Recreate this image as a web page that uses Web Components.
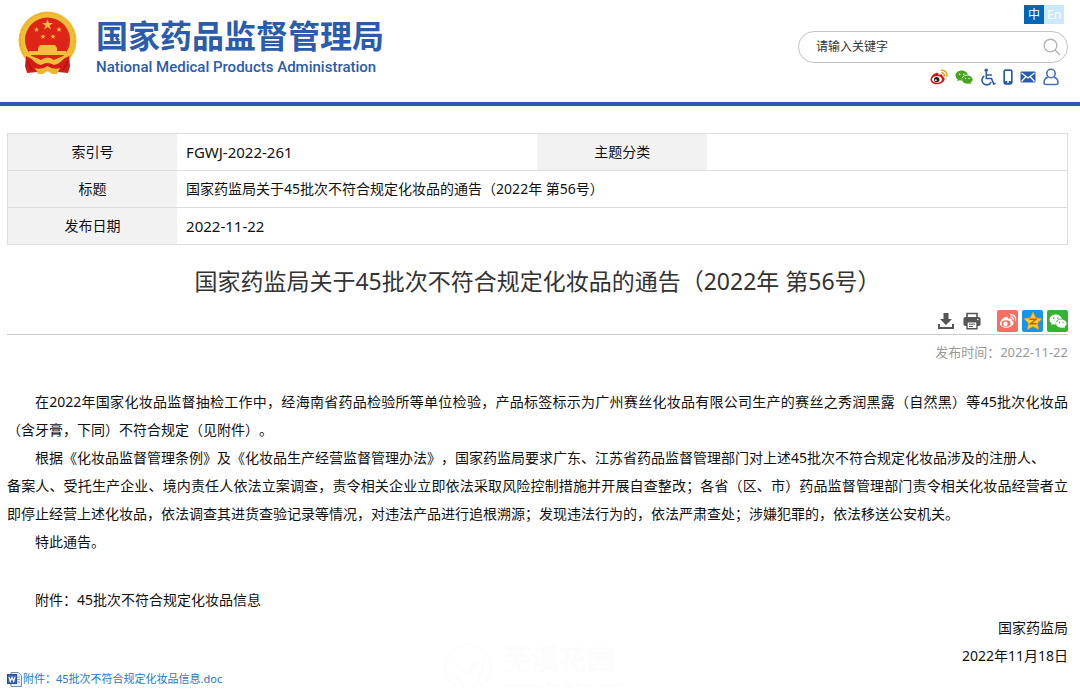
<!DOCTYPE html>
<html lang="zh-CN">
<head>
<meta charset="utf-8">
<title>国家药监局关于45批次不符合规定化妆品的通告</title>
<style>
  body {
    margin: 0;
    background: #fff;
    color: #111;
    font: 14px/28px "Noto Sans", "Noto Sans CJK SC", sans-serif;
    text-spacing-trim: space-all;
  }
</style>
</head>
<body>
<notice-page></notice-page>

<script>
const define = (name, html) => customElements.define(name, class extends HTMLElement {
  constructor() {
    super();
    this.attachShadow({ mode: 'open' }).innerHTML = html;
  }
});

// glyphs shared by the header row and the share buttons
const ICONS = {
  weibo: `<svg viewBox="0 0 18 16"><path d="M.5 10.500C.5 7 6 2.500 8 4c.8.500.5 1.300.3 1.900 2.700-.9 4.800-.6 4.300 1.600C17.500 9.500 13 15.300 7 15.300c-3.500 0-6.500-1.800-6.500-4.800z" fill="#e0120f"/><ellipse cx="7" cy="10.400" rx="5" ry="3.500" fill="#fff"/><circle cx="6.700" cy="10.600" r="2.700" fill="#222"/><circle cx="5.900" cy="11.200" r=".9" fill="#fff"/><path d="M11.500 1.200a5 5 0 0 1 5.300 6.300M11.800 3.800a2.500 2.500 0 0 1 2.500 3" fill="none" stroke="#f0a416" stroke-width="1.500" stroke-linecap="round"/></svg>`,
  weiboWhite: `<svg viewBox="0 0 18 16"><path d="M1 10.500C1 7 6.500 2.500 8.500 4c.6.500.4 1.300.2 1.900 2.500-.9 4.600-.6 4 1.600 5 2-.5 7.300-5.500 7.300C4 14.800 1 13 1 10.500z" fill="#fff"/><ellipse cx="7" cy="10.400" rx="4.500" ry="3.200" fill="#f56f63"/><circle cx="6.500" cy="10.700" r="2.200" fill="#fff"/><path d="M11.500 1.600a4.700 4.700 0 0 1 5 6M12 4a2.200 2.200 0 0 1 2.200 2.700" fill="none" stroke="#fff" stroke-width="1.300" stroke-linecap="round"/></svg>`,
  wechat: `<svg viewBox="0 0 18 16"><path d="M6.800 1.500C3.300 1.500.5 3.700.5 6.500c0 1.600.9 3 2.300 3.900L2.300 12.300l2.100-1.100c.8.200 1.600.3 2.500.3C6 7.800 9 5.500 12.900 5.700 12.200 3.300 9.800 1.500 6.800 1.500z" fill="currentColor"/><path d="M12.300 6.500c-3 0-5.300 1.800-5.300 4.100s2.300 4.100 5.300 4.100c.7 0 1.300-.1 1.900-.3l1.700.9-.4-1.500c1.300-.8 2.100-1.900 2.100-3.200 0-2.300-2.300-4.100-5.300-4.100z" fill="currentColor"/><g fill="var(--eye, #fff)"><circle cx="4.700" cy="5.200" r=".8"/><circle cx="8.700" cy="5.200" r=".8"/><circle cx="10.500" cy="9.500" r=".7"/><circle cx="14" cy="9.500" r=".7"/></g></svg>`,
  access: `<svg viewBox="0 0 16 18" fill="none" stroke="#2b5cab" stroke-width="1.600"><circle cx="6.200" cy="2.200" r="1.700" fill="#2b5cab" stroke="none"/><path d="M6.300 4v6.500h5.200l2.200 5.500 1.800-.8M6.500 7h5.500M4.300 8a4.800 4.800 0 1 0 6.800 6.200"/></svg>`,
  phone: `<svg viewBox="0 0 10 16"><rect x="1.200" y="1.200" width="7.600" height="13.600" rx="1.300" fill="none" stroke="#2b5cab" stroke-width="1.700"/><path d="M1 12h8v3H1z" fill="#2b5cab"/><circle cx="5" cy="13" r=".9" fill="#fff"/></svg>`,
  mail: `<svg viewBox="0 0 16 12"><rect x=".5" y=".5" width="15" height="11" rx="1" fill="#2b5cab"/><path d="M1.500 2 8 7l6.500-5M1.500 10.500l4.500-5M14.500 10.500l-4.500-5" fill="none" stroke="#fff" stroke-width="1.200"/></svg>`,
  user: `<svg viewBox="0 0 16 18" fill="none" stroke="#4a6fba" stroke-width="1.600"><circle cx="8" cy="5.500" r="4.200"/><path d="M5 9.200C2.200 10 1 12 1 14.500 1 16 1.500 16.500 2.800 16.500h10.400c1.300 0 1.800-.5 1.800-2 0-2.500-1.200-4.500-4-5.300"/></svg>`,
  search: `<svg viewBox="0 0 18 18" fill="none" stroke="#b5b5b5" stroke-width="1.400"><circle cx="7.500" cy="7.500" r="6.300"/><path d="m12 12 5 5"/></svg>`,
  download: `<svg viewBox="0 0 18 18" fill="#555"><path d="M6.500 1h5v6H15l-6 6-6-6h3.500z"/><path d="M1 12h2v3h12v-3h2v5H1z"/></svg>`,
  print: `<svg viewBox="0 0 18 18"><path d="M4 5V1.500h10V5" fill="none" stroke="#555" stroke-width="1.600"/><rect x=".5" y="5" width="17" height="9" rx="1.800" fill="#555"/><path d="M4 9.800h10v7H4z" fill="#fff" stroke="#555" stroke-width="1.400"/><path d="M6 12.200h6M6 14.500h4" stroke="#555"/><circle cx="14.800" cy="7.500" r=".8" fill="#fff"/></svg>`,
  qzone: `<svg viewBox="0 0 20 20"><path d="m10 1 2.800 5.800 6.300.9-4.600 4.400 1.200 6.400L10 15.500l-5.700 3 1.200-6.400L.9 7.700l6.300-.9z" fill="#ffc928" stroke="#e9930c" stroke-width=".6"/><path d="M6.500 8.200h6.500l-5.500 4.600h6" fill="none" stroke="#b5640b" stroke-width="1.400"/></svg>`,
  word: `<svg viewBox="0 0 15 15"><path d="M4 .5h7.500l3 3v11H4z" fill="#e3edfb" stroke="#6f8fc4"/><path d="M8 5h5M8 7.500h5M8 10h5" stroke="#8aa6d6"/><rect x=".5" y="2.500" width="9" height="9" fill="#3c66b4" stroke="#2a4c92"/><path d="m2 4.800 1.300 4.500L5 5.500l1.700 3.800L8 4.800" fill="none" stroke="#fff" stroke-width="1.200"/></svg>`,
};

define('national-emblem', `
  <style>:host { display: block; width: 60px; height: 64px; } svg { display: block; }</style>
  <svg viewBox="0 0 60 64" width="60" height="64" role="img" aria-label="国徽">
    <circle cx="29.500" cy="29.500" r="29" fill="#f0be35"/>
    <circle cx="29.500" cy="29.500" r="27.300" fill="none" stroke="#e3a928" stroke-width="1" stroke-dasharray="3 2"/>
    <circle cx="29.500" cy="29" r="22.500" fill="#de2418"/>
    <g fill="#f3bd3d">
      <path d="m29.500 8 1.300 4h4.200l-3.400 2.500 1.300 4-3.400-2.500-3.400 2.500 1.300-4L24 12h4.200z"/>
      <path d="m18.500 16 .7 1.800h2l-1.600 1.200.6 2-1.700-1.200-1.700 1.200.6-2-1.600-1.200h2zM41 16l.7 1.800h2L42.100 19l.6 2-1.700-1.200-1.700 1.200.6-2-1.600-1.200h2zM25 23l.7 1.800h2L26.100 26l.6 2-1.700-1.200-1.700 1.200.6-2-1.600-1.200h2zM35 23l.7 1.800h2L36.100 26l.6 2-1.700-1.200-1.700 1.200.6-2-1.600-1.200h2z"/>
      <path d="M22 34h15l2 3H20zM20 37h19v3H20zM11 40h37v4H11z"/>
    </g>
    <path d="M8 45q7 4 11 3l10.500 3L40 48q4 1 11-3l1 10-2 7-10-1-10.500-2L19 61l-10 1-2-7z" fill="#d31b18"/>
    <path d="M11 44q8 3 12 5 6.500-5 13 0 4-2 12-5-5 9-12 10-6.500-4-13 0-7-1-12-10z" fill="#f2bf3a"/>
    <path d="M17 57q7 2 12.500-2 5.500 4 12.500 2l-3 6h-5l-4.500-3-4.500 3h-5z" fill="#edb534"/>
    <path d="M9 50l5 9M50 50l-5 9" stroke="#a91414" stroke-width="1.500"/>
  </svg>
`);

define('site-brand', `
  <style>
    :host { display: block; }
    a { display: flex; gap: 18px; color: #2b5cab; text-decoration: none; }
    .zh { display: block; margin-top: 5px; font-size: 32px; font-weight: 700; line-height: 40px; }
    .en { display: block; font: 500 15px/22px Roboto, sans-serif; }
  </style>
  <a href="#">
    <national-emblem></national-emblem>
    <span><span class="zh">国家药品监督管理局</span><span class="en">National Medical Products Administration</span></span>
  </a>
`);

define('site-tools', `
  <style>
    :host { display: flex; flex-direction: column; align-items: flex-end; width: 270px; }
    .lang { display: flex; margin-right: 4px; font-size: 12px; line-height: 19px; }
    .lang a { width: 20px; text-align: center; color: #fff; background: #cce8ff; text-decoration: none; }
    .lang a.on { background: #0068b7; }
    form { display: flex; align-items: center; box-sizing: border-box; width: 100%; height: 32px; margin: 7px 0 5px;
      padding: 0 6px 0 17px; border: 1px solid #c4c4c4; border-radius: 16px; }
    input { flex: 1; min-width: 0; padding: 0; border: 0; outline: 0; background: none; font: inherit; font-size: 12px; }
    input::placeholder { color: #333; opacity: 1; }
    button { padding: 0; border: 0; background: none; line-height: 0; }
    button svg { width: 18px; height: 18px; }
    nav { display: flex; align-items: center; gap: 7px; height: 18px; margin-right: 9px; }
    nav a { display: flex; color: #45a51c; }
    nav svg { height: 16px; }
    nav a.tall svg { height: 18px; }
    nav a.mail svg { height: 12px; }
  </style>
  <div class="lang"><a class="on" href="#">中</a><a href="#">En</a></div>
  <form>
    <input type="text" placeholder="请输入关键字" aria-label="请输入关键字">
    <button type="button" aria-label="搜索">${ICONS.search}</button>
  </form>
  <nav>
    <a href="#" aria-label="微博">${ICONS.weibo}</a>
    <a href="#" aria-label="微信">${ICONS.wechat}</a>
    <a href="#" aria-label="无障碍" class="tall">${ICONS.access}</a>
    <a href="#" aria-label="移动版">${ICONS.phone}</a>
    <a href="#" aria-label="邮箱" class="mail">${ICONS.mail}</a>
    <a href="#" aria-label="个人中心" class="tall">${ICONS.user}</a>
  </nav>
`);

define('site-header', `
  <style>
    :host { display: block; border-bottom: 4px solid #2b5cab; }
    header { display: flex; justify-content: space-between; align-items: flex-start; height: 97px; padding: 5px 12px 0 18px; }
    site-brand { margin-top: 6px; }
  </style>
  <header><site-brand></site-brand><site-tools></site-tools></header>
`);

define('notice-meta', `
  <style>
    :host { display: block; }
    table { width: 100%; table-layout: fixed; border-collapse: collapse; line-height: 20px; }
    tr { border: 1px solid #ddd; }
    th, td { height: 20px; padding: 8px 9px; }
    th { background: #f2f2f2; font-weight: 400; text-align: center; }
    td.num { font-size: 15px; }
    col.label { width: 16%; }
    col.value { width: 34%; }
  </style>
  <table>
    <colgroup><col class="label"><col class="value"><col class="label"><col class="value"></colgroup>
    <tr><th scope="row">索引号</th><td class="num">FGWJ-2022-261</td><th scope="row">主题分类</th><td></td></tr>
    <tr><th scope="row">标题</th><td colspan="3">国家药监局关于45批次不符合规定化妆品的通告（2022年 第56号）</td></tr>
    <tr><th scope="row">发布日期</th><td class="num" colspan="3">2022-11-22</td></tr>
  </table>
`);

define('share-bar', `
  <style>
    :host { display: flex; justify-content: flex-end; align-items: center; gap: 4px; padding-bottom: 2px; border-bottom: 1px solid #ccc; }
    button { display: flex; padding: 0; border: 0; background: none; margin-right: 4px; }
    button + button { margin-right: 12px; }
    button svg { width: 18px; height: 18px; }
    a { display: flex; align-items: center; justify-content: center; width: 21px; height: 22px; border-radius: 2px; color: #fff; }
    a svg { width: 18px; height: 16px; }
    .weibo { background: #f56f63; }
    .qzone { background: #1a94e8; }
    .qzone svg { width: 20px; height: 20px; }
    .wechat { background: #34b233; --eye: #34b233; }
  </style>
  <button type="button" aria-label="下载">${ICONS.download}</button>
  <button type="button" aria-label="打印">${ICONS.print}</button>
  <a class="weibo" href="#" aria-label="分享到微博">${ICONS.weiboWhite}</a>
  <a class="qzone" href="#" aria-label="分享到QQ空间">${ICONS.qzone}</a>
  <a class="wechat" href="#" aria-label="分享到微信">${ICONS.wechat}</a>
`);

define('notice-body', `
  <style>
    :host { display: block; }
    ::slotted(p) { margin: 0; text-align: justify; text-indent: 28px; }
    ::slotted(p.gap) { margin-top: 30px; }
    ::slotted(p.sign) { text-align: right; }
  </style>
  <slot></slot>
`);

define('file-link', `
  <style>
    :host { display: flex; }
    a { display: flex; align-items: center; gap: 1px; color: #2478cf; font-size: 11px; line-height: 16px; text-decoration: none; }
    svg { width: 15px; height: 15px; }
  </style>
  <a href="#">${ICONS.word}<slot></slot></a>
`);

// barely visible stamp behind the foot of the page
define('page-watermark', `
  <style>
    :host { display: flex; align-items: center; gap: 10px; color: #fcfcfc; }
    svg { width: 50px; height: 50px; }
    .name { display: block; font-size: 28px; font-weight: 700; line-height: 40px; }
    .url { display: block; font: 700 14px/16px "DejaVu Sans", sans-serif; }
  </style>
  <svg viewBox="0 0 50 50" fill="none" stroke="currentColor" stroke-width="2"><circle cx="25" cy="25" r="23"/><path d="M6 15c2 10 12 8 20 20 4-12 2-12 16-18-4 12-4 24-16 30M8 32c6 2 10 6 14 14"/></svg>
  <span><span class="name">芜溪花园</span><span class="url">www.hybbs.net</span></span>
`);

define('notice-page', `
  <style>
    :host { display: block; }
    main { position: relative; padding: 27px 12px 0 7px; }
    h1 { margin: 18px 0 11px; color: #333; font-size: 23px; font-weight: 400; line-height: 36px; text-align: center; }
    time { display: block; margin: 7px 0 26px; color: #999; font-size: 13px; line-height: 20px; text-align: right; }
    file-link { margin-top: 1px; }
    page-watermark { position: absolute; z-index: -1; left: 41%; bottom: -8px; }
  </style>
  <site-header></site-header>
  <main>
    <notice-meta></notice-meta>
    <h1>国家药监局关于45批次不符合规定化妆品的通告（2022年 第56号）</h1>
    <share-bar></share-bar>
    <time>发布时间：2022-11-22</time>
    <notice-body>
      <p>在2022年国家化妆品监督抽检工作中，经海南省药品检验所等单位检验，产品标签标示为广州赛丝化妆品有限公司生产的赛丝之秀润黑露（自然黑）等45批次化妆品（含牙膏，下同）不符合规定（见附件）。</p>
      <p>根据《化妆品监督管理条例》及《化妆品生产经营监督管理办法》，国家药监局要求广东、江苏省药品监督管理部门对上述45批次不符合规定化妆品涉及的注册人、<br>备案人、受托生产企业、境内责任人依法立案调查，责令相关企业立即依法采取风险控制措施并开展自查整改；各省（区、市）药品监督管理部门责令相关化妆品经营者立即停止经营上述化妆品，依法调查其进货查验记录等情况，对违法产品进行追根溯源；发现违法行为的，依法严肃查处；涉嫌犯罪的，依法移送公安机关。</p>
      <p>特此通告。</p>
      <p class="gap">附件：45批次不符合规定化妆品信息</p>
      <p class="sign">国家药监局</p>
      <p class="sign">2022年11月18日</p>
    </notice-body>
    <file-link>附件：45批次不符合规定化妆品信息.doc</file-link>
    <page-watermark></page-watermark>
  </main>
`);
</script>
</body>
</html>
